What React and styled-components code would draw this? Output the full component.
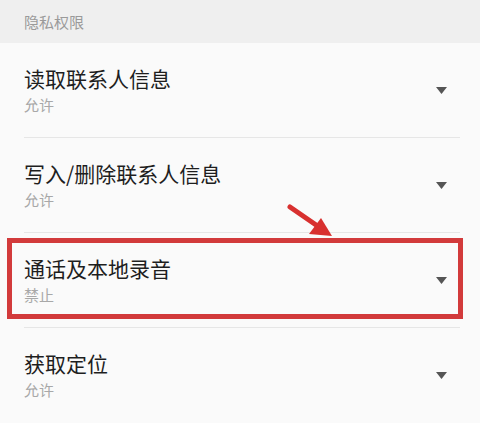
import React from "react";
import styled, { createGlobalStyle } from "styled-components";

const Global = createGlobalStyle`
  html, body { margin: 0; padding: 0; background: #fafafa; }
  body { font-family: "Noto Sans CJK SC", "Noto Sans", sans-serif; }
`;

const Page = styled.div`
  width: 480px;
  height: 423px;
  overflow: hidden;
  background: #fafafa;
`;

const SectionHeader = styled.div`
  height: 43px;
  background: #efefef;
  display: flex;
  align-items: center;
  padding-left: 24px;
  font-size: 15px;
  color: #9a9a9a;
`;

const List = styled.div`
  position: relative;
`;

const ItemRow = styled.div`
  position: relative;
  height: ${(p) => p.$h}px;
  display: flex;
  align-items: center;
  justify-content: space-between;
  padding: 0 33px 0 24px;
`;

const Texts = styled.div`
  display: flex;
  flex-direction: column;
`;

const Title = styled.div`
  font-size: 21px;
  line-height: 26px;
  color: #1e1e1e;
`;

const Sub = styled.div`
  font-size: 15px;
  line-height: 20px;
  margin-top: 4px;
  color: #a8a8a8;
`;

const Caret = styled.svg`
  width: 11px;
  height: 7px;
  flex: none;
`;

const Highlight = styled.div`
  position: absolute;
  left: 7px;
  right: 17px;
  top: 5px;
  bottom: 8px;
  border: 5px solid #d23a3b;
  pointer-events: none;
`;

const Pointer = styled.svg`
  position: absolute;
  left: 285px;
  top: 158px;
  width: 52px;
  height: 40px;
`;

const Line = styled.div`
  height: 1px;
  background: #e6e6e6;
  margin-left: 24px;
  margin-right: 20px;
`;

const items = [
  { t: "读取联系人信息", s: "允许", h: 94 },
  { t: "写入/删除联系人信息", s: "允许", h: 94 },
  { t: "通话及本地录音", s: "禁止", h: 94, hl: true },
  { t: "获取定位", s: "允许", h: 94 },
];

export default function App() {
  return (
    <Page>
      <Global />
      <SectionHeader>隐私权限</SectionHeader>
      <List>
        {items.map((it, i) => (
          <React.Fragment key={i}>
            <ItemRow $h={it.h}>
              <Texts>
                <Title>{it.t}</Title>
                <Sub>{it.s}</Sub>
              </Texts>
              <Caret viewBox="0 0 11 7">
                <path d="M0 0 H11 L5.5 7 Z" fill="#555" />
              </Caret>
              {it.hl && <Highlight />}
            </ItemRow>
            {i < items.length - 1 && <Line />}
          </React.Fragment>
        ))}
        <Pointer viewBox="0 0 52 40">
          <line x1="5" y1="6" x2="34" y2="26" stroke="#d8302f" strokeWidth="5" strokeLinecap="round" />
          <path d="M47 35 L24 33 L36 17 Z" fill="#d8302f" />
        </Pointer>
      </List>
    </Page>
  );
}
